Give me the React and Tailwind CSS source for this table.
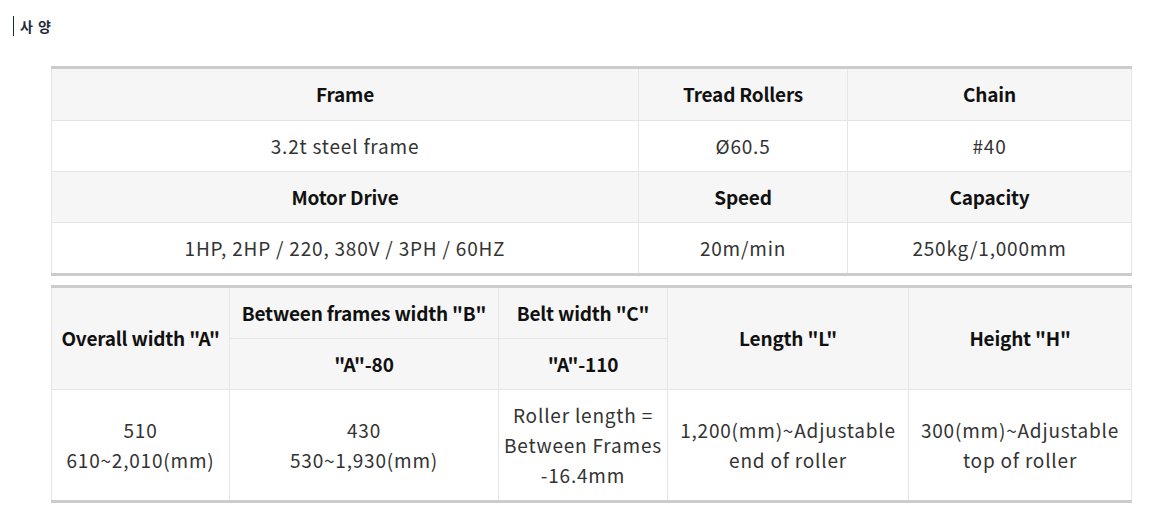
export default function App() {
  const th = "border border-[#e5e5e5] bg-[#f6f6f6] font-bold text-[#111] text-[19px] tracking-[-0.2px] text-center align-middle";
  const td = "border border-[#e5e5e5] bg-white text-[#333] text-[19px] tracking-[0.8px] text-center align-middle";

  return (
    <div className="min-h-screen bg-white font-['Noto_Sans_CJK_KR','Noto_Sans',sans-serif]">
      <div className="pt-[17px] pl-[13px] text-[14px] font-bold text-[#1e2a3a] leading-[18px]">
        <span className="border-l border-[#1e2a3a] pl-[6px] tracking-[1px]">사 양</span>
      </div>

      <div className="pl-[51px] pt-[31px] w-[1131px]">
        <table className="w-[1080px] table-fixed border-collapse border-t-[3px] border-b-[3px] border-t-[#cccccc] border-b-[#cccccc]">
          <colgroup>
            <col className="w-[587px]" />
            <col className="w-[209px]" />
            <col className="w-[284px]" />
          </colgroup>
          <tbody>
            <tr className="h-[53px]">
              <th className={th}>Frame</th>
              <th className={th}>Tread Rollers</th>
              <th className={th}>Chain</th>
            </tr>
            <tr className="h-[51px]">
              <td className={td}>3.2t steel frame</td>
              <td className={td}>Ø60.5</td>
              <td className={td}>#40</td>
            </tr>
            <tr className="h-[51px]">
              <th className={th}>Motor Drive</th>
              <th className={th}>Speed</th>
              <th className={th}>Capacity</th>
            </tr>
            <tr className="h-[52px]">
              <td className={td}>1HP, 2HP / 220, 380V / 3PH / 60HZ</td>
              <td className={td}>20m/min</td>
              <td className={td}>250kg/1,000mm</td>
            </tr>
          </tbody>
        </table>

        <table className="mt-[9px] w-[1080px] table-fixed border-collapse border-t-[3px] border-b-[3px] border-t-[#cccccc] border-b-[#cccccc]">
          <colgroup>
            <col className="w-[178px]" />
            <col className="w-[269px]" />
            <col className="w-[169px]" />
            <col className="w-[241px]" />
            <col className="w-[223px]" />
          </colgroup>
          <tbody>
            <tr className="h-[52px]">
              <th rowSpan={2} className={th}>Overall width "A"</th>
              <th className={th}>Between frames width "B"</th>
              <th className={th}>Belt width "C"</th>
              <th rowSpan={2} className={th}>Length "L"</th>
              <th rowSpan={2} className={th}>Height "H"</th>
            </tr>
            <tr className="h-[51px]">
              <th className={th}>"A"-80</th>
              <th className={th}>"A"-110</th>
            </tr>
            <tr className="h-[112px] leading-[30px]">
              <td className={td}>510<br />610~2,010(mm)</td>
              <td className={td}>430<br />530~1,930(mm)</td>
              <td className={td}>Roller length =<br />Between Frames<br />-16.4mm</td>
              <td className={td}>1,200(mm)~Adjustable<br />end of roller</td>
              <td className={td}>300(mm)~Adjustable<br />top of roller</td>
            </tr>
          </tbody>
        </table>
      </div>
    </div>
  );
}
